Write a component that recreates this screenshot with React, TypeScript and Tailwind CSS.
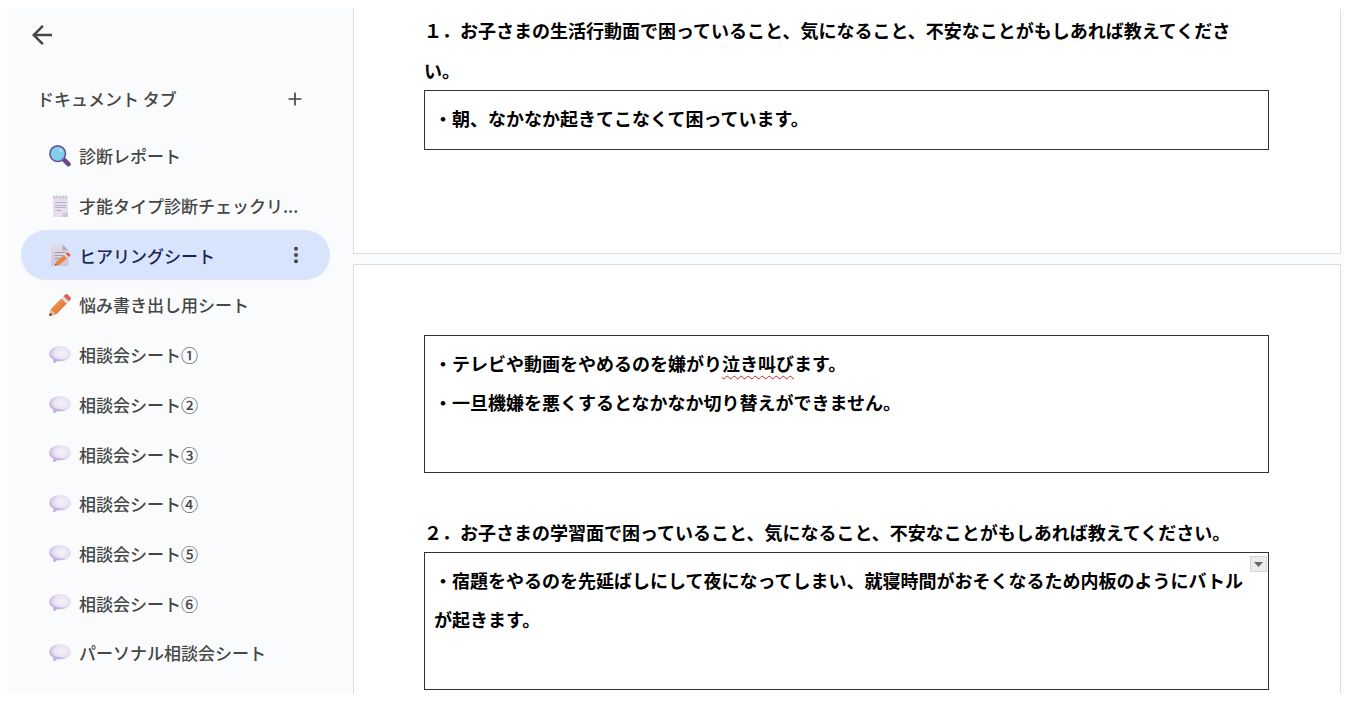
import React, { useState } from 'react';

type IconName = 'search' | 'notepad' | 'memo' | 'pencil' | 'bubble';

interface DocTab {
  id: string;
  icon: IconName;
  title: string;
}

const tabs: DocTab[] = [
  { id: 'report', icon: 'search', title: '診断レポート' },
  { id: 'checklist', icon: 'notepad', title: '才能タイプ診断チェックリ...' },
  { id: 'hearing', icon: 'memo', title: 'ヒアリングシート' },
  { id: 'worries', icon: 'pencil', title: '悩み書き出し用シート' },
  { id: 'talk1', icon: 'bubble', title: '相談会シート①' },
  { id: 'talk2', icon: 'bubble', title: '相談会シート②' },
  { id: 'talk3', icon: 'bubble', title: '相談会シート③' },
  { id: 'talk4', icon: 'bubble', title: '相談会シート④' },
  { id: 'talk5', icon: 'bubble', title: '相談会シート⑤' },
  { id: 'talk6', icon: 'bubble', title: '相談会シート⑥' },
  { id: 'personal', icon: 'bubble', title: 'パーソナル相談会シート' },
];

// Shared gradients for the tab emoji
function IconDefs() {
  return (
    <svg className="absolute size-0" aria-hidden="true">
      <defs>
        <radialGradient id="bubbleFill" cx="0.58" cy="0.42" r="0.6">
          <stop offset="0" stopColor="#f5f1f8" />
          <stop offset="0.55" stopColor="#ebe4f4" />
          <stop offset="1" stopColor="#c4b5e2" />
        </radialGradient>
        <linearGradient id="pencilFill" x1="0" y1="0" x2="1" y2="1">
          <stop offset="0.2" stopColor="#f19a4a" />
          <stop offset="1" stopColor="#d9662f" />
        </linearGradient>
        <linearGradient id="paperFill" x1="0" y1="0" x2="0" y2="1">
          <stop offset="0" stopColor="#e2dde6" />
          <stop offset="1" stopColor="#cfc4d6" />
        </linearGradient>
      </defs>
    </svg>
  );
}

function TabIcon({ name }: { name: IconName }) {
  return (
    <svg className="size-[22px] shrink-0" viewBox="0 0 22 22" aria-hidden="true">
      {name === 'search' && (
        <>
          <path d="M15.4 15.2L19.4 19.2" stroke="#704587" strokeWidth="4.6" strokeLinecap="round" />
          <path d="M13.4 13.2l2.6 2.6" stroke="#5d4a9c" strokeWidth="2.4" />
          <circle cx="8.7" cy="8.7" r="7.8" fill="#86cdec" stroke="#5f57a0" strokeWidth="1.6" />
          <circle cx="11.6" cy="5.2" r="1.5" fill="#b4e1f5" />
        </>
      )}
      {name === 'notepad' && (
        <>
          <path d="M4 1.5h15v16.5l-3.5 4H4z" fill="#e6def0" />
          <path d="M19 17.5l-5 .3-.6 4.2H19z" fill="#cfc5df" />
          <path d="M4.500 .6L6 3.400M7.500 .6L9 3.400M10.500 .6L12 3.400M13.500 .6L15 3.400M16.500 .6l1 2.800" stroke="#aaa4b2" strokeWidth="1" />
          <path d="M6 7.500h11M6 10.500h11M6 12.500h11M6 15.500h6.500" stroke="#b9b1c5" strokeWidth="1" />
        </>
      )}
      {name === 'memo' && (
        <>
          <path d="M2 0.500h11.500l6 6V22H2z" fill="url(#paperFill)" />
          <path d="M13.500 0.500l6 6h-6z" fill="#b2aabd" />
          <path d="M5.500 8.500h11M5.500 11.500h9M5.500 14.500h6" stroke="#a69eb0" strokeWidth="1" />
          <path d="M6 21.500l1.300-4 8.200-6.800 3 3.400-8.300 6.600z" fill="url(#pencilFill)" />
          <path d="M15 11.100l1.700-1.400 3 3.400-1.600 1.400z" fill="#e9d8e8" />
          <path d="M16.700 9.700l1.500-1.100q1-.5 1.800.4l1.200 1.400q.7 1-.2 1.800l-1.300.9z" fill="#e3604b" />
          <path d="M6 21.500l.6-1.900 1.300 1.400z" fill="#574052" />
        </>
      )}
      {name === 'pencil' && (
        <>
          <path d="M0.200 21.900l1.600-7L12.800 3.900l5.400 5.400L7 20.400z" fill="url(#pencilFill)" />
          <path d="M0.200 21.900l1.600-7 5.200 5.500z" fill="#e9bd92" />
          <path d="M0.200 21.900l.8-3.200 2.400 2.400z" fill="#503646" />
          <path d="M12.400 4.400L14.600 2.200l5.400 5.400-2.300 2.200z" fill="#e4dcf0" />
          <path d="M14.500 2.300L16.400.500q1.200-1 2.300 0l2.900 2.900q.9 1.100-.1 2.200l-1.600 1.900z" fill="#e2604e" />
        </>
      )}
      {name === 'bubble' && (
        <>
          <path
            d="M11 2.200c6 0 10.800 3 10.800 7.500S17 17.200 11 17.200c-.9 0-1.800-.1-2.700-.2-1 1.300-2.600 2-4.300 2 .5-.9.6-2.200.4-3.500C1.700 14 .2 12 .2 9.700.2 5.200 5 2.200 11 2.200z"
            fill="url(#bubbleFill)"
          />
          <path
            d="M.4 10.800c.6 2 2 3.600 4 4.700.2 1.300.1 2.600-.4 3.500 1.700 0 3.300-.7 4.300-2 3 .5 6.500 0 9.200-1.500C12 16.200 5 15 .4 10.800z"
            fill="#b09ddb"
            opacity="0.5"
          />
        </>
      )}
    </svg>
  );
}

interface SidebarProps {
  activeTab: string;
  onSelect: (id: string) => void;
}

function Sidebar({ activeTab, onSelect }: SidebarProps) {
  return (
    <aside className="flex w-[346px] shrink-0 flex-col pt-[11px] pb-4 text-[17px] font-medium text-[#444746]">
      <button aria-label="戻る" className="ml-5 cursor-pointer self-start">
        <svg className="size-[30px]" viewBox="0 0 24 24" fill="currentColor">
          <path d="M7.825 13l5.6 5.6L12 20l-8-8 8-8 1.425 1.4L7.825 11H20v2z" />
        </svg>
      </button>

      <div className="mt-[29px] flex h-10 items-center justify-between pr-[47px] pl-[30px]">
        <h2>ドキュメント タブ</h2>
        <button aria-label="タブを追加" className="cursor-pointer p-1">
          <svg className="size-[14px]" viewBox="0 0 14 14" fill="none" stroke="currentColor" strokeWidth="1.7">
            <path d="M7 .5v13M.5 7h13" />
          </svg>
        </button>
      </div>

      <ul className="mt-3 mr-[23px] ml-[14px] flex flex-1 flex-col">
        {tabs.map((tab) => {
          const active = tab.id === activeTab;
          return (
            <li
              key={tab.id}
              className={`flex max-h-[50px] flex-1 items-center rounded-full pr-6 pl-7 ${
                active ? 'bg-[#d8e3fc] text-[#1b2656]' : ''
              }`}
            >
              <button
                onClick={() => onSelect(tab.id)}
                className="flex flex-1 cursor-pointer items-center gap-2 text-left whitespace-nowrap"
              >
                <TabIcon name={tab.icon} />
                {tab.title}
              </button>
              {active && (
                <button aria-label="タブのオプション" className="cursor-pointer text-[#444746]">
                  <svg className="size-5" viewBox="0 0 20 20" fill="currentColor">
                    <circle cx="10" cy="3.7" r="2" />
                    <circle cx="10" cy="10" r="2" />
                    <circle cx="10" cy="16.3" r="2" />
                  </svg>
                </button>
              )}
            </li>
          );
        })}
      </ul>
    </aside>
  );
}

function AnswerBox({ children }: { children: React.ReactNode }) {
  return (
    <div className="relative border border-[#333333] px-[9px] pt-2 pb-[11px] leading-[39px]">{children}</div>
  );
}

export default function App() {
  const [activeTab, setActiveTab] = useState('hearing');

  return (
    <div className="min-h-screen bg-white pt-[9px] pr-[2px] pb-2 pl-[7px] font-['Noto_Sans_CJK_JP',sans-serif]">
      <IconDefs />
      <div className="flex min-h-[calc(100vh-17px)] bg-[#fafbfd]">
        <Sidebar activeTab={activeTab} onSelect={setActiveTab} />

        <main className="flex min-w-0 flex-1 flex-col gap-[10px] pr-[3px] text-[18px] font-bold text-black">
          <section className="border border-t-0 border-[#dcdee0] bg-white pt-px pr-[71px] pb-[103px] pl-[70px]">
            <h3 className="pr-4 leading-10">
              １．お子さまの生活行動面で困っていること、気になること、不安なことがもしあれば教えてください。
            </h3>
            <AnswerBox>
              <p>・朝、なかなか起きてこなくて困っています。</p>
            </AnswerBox>
          </section>

          <section className="flex-1 border border-b-0 border-[#dcdee0] bg-white pt-[70px] pr-[71px] pl-[70px]">
            <AnswerBox>
              <p>
                ・テレビや動画をやめるのを嫌がり
                <span className="underline decoration-[#c5221f] decoration-wavy decoration-1 underline-offset-4 [text-decoration-skip-ink:none]">
                  泣き叫び
                </span>
                ます。
              </p>
              <p>・一旦機嫌を悪くするとなかなか切り替えができません。</p>
              <p className="h-[39px]" />
            </AnswerBox>

            <h3 className="mt-[39px] pr-4 leading-10">
              ２．お子さまの学習面で困っていること、気になること、不安なことがもしあれば教えてください。
            </h3>
            <AnswerBox>
              <p>・宿題をやるのを先延ばしにして夜になってしまい、就寝時間がおそくなるため内板のようにバトルが起きます。</p>
              <p className="h-[39px]" />
              <button
                aria-label="セルのオプション"
                className="absolute top-[3px] right-px flex h-4 w-[17px] cursor-pointer items-center justify-center border border-[#d5d5d5] bg-[#ececec]"
              >
                <svg className="h-[5px] w-[9px]" viewBox="0 0 9 5" fill="#666666">
                  <path d="M0 0h9L4.5 5z" />
                </svg>
              </button>
            </AnswerBox>
          </section>
        </main>
      </div>
    </div>
  );
}
